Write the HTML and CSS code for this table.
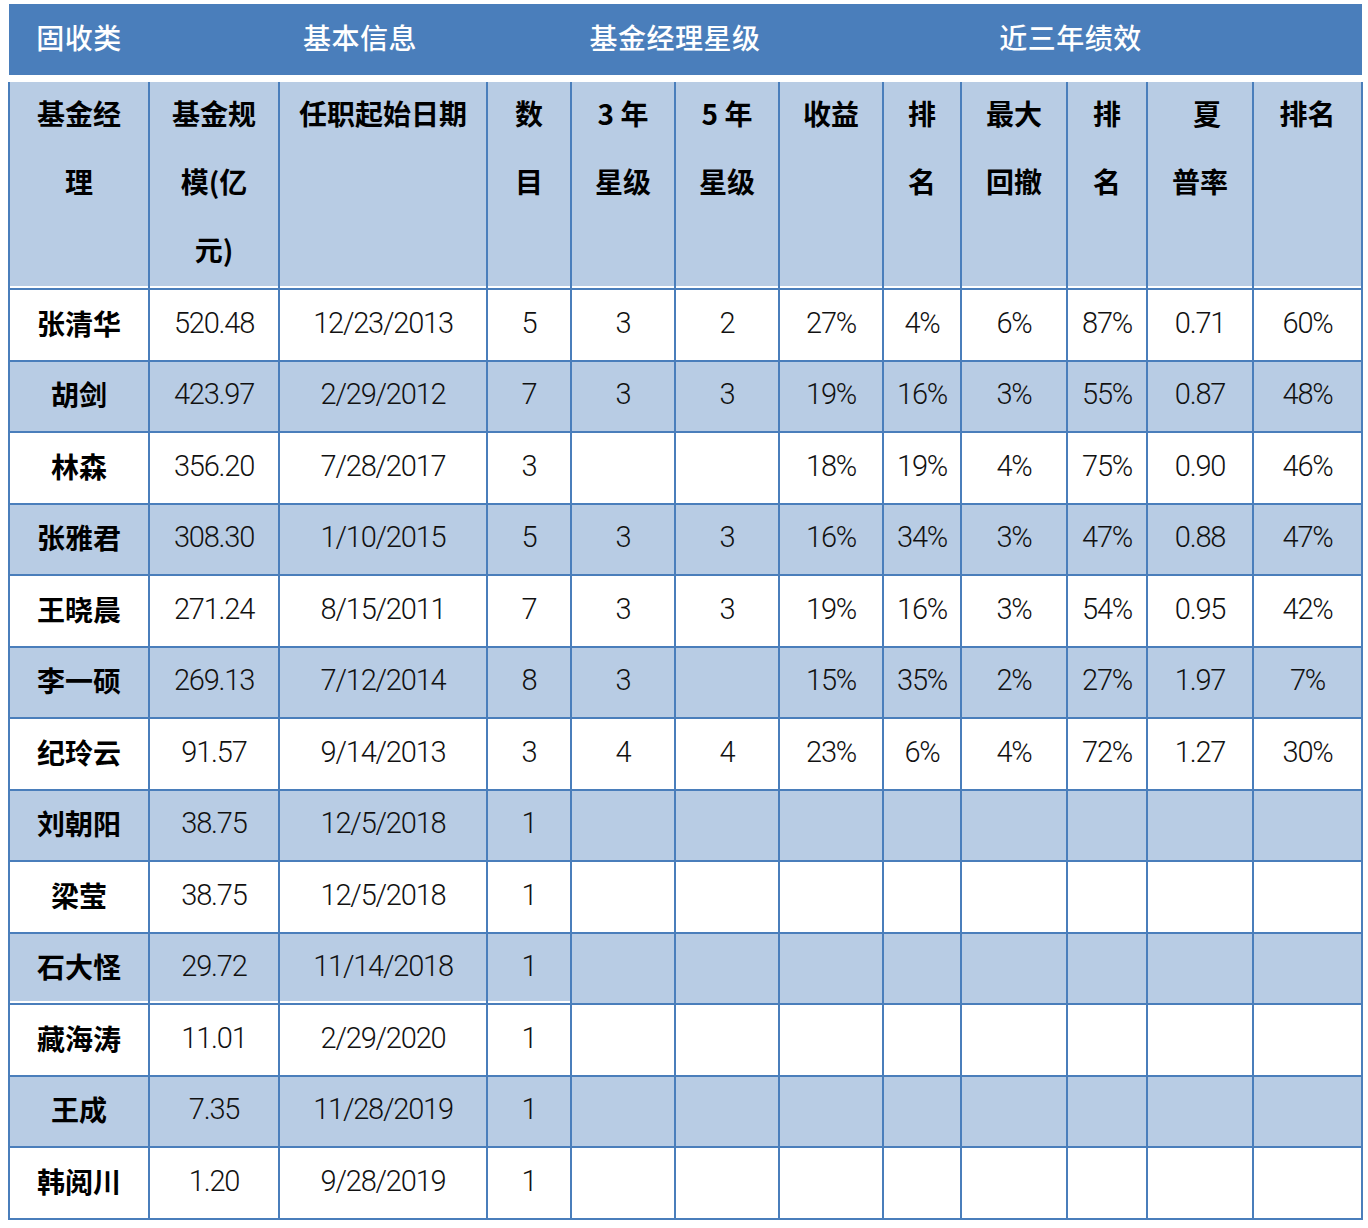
FILE: index.html
```html
<!DOCTYPE html>
<html lang="zh-CN">
<head>
<meta charset="utf-8">
<title>固收类 基金经理</title>
<link rel="stylesheet" href="styles.css">
</head>
<body>
<table class="grid">
  <colgroup>
    <col class="c1"><col class="c2"><col class="c3"><col class="c4"><col class="c5"><col class="c6">
    <col class="c7"><col class="c8"><col class="c9"><col class="c10"><col class="c11"><col class="c12">
  </colgroup>
  <thead>
    <tr class="band">
      <th>固收类</th>
      <th colspan="3">基本信息</th>
      <th colspan="2">基金经理星级</th>
      <th colspan="6">近三年绩效</th>
    </tr>
    <tr class="sub">
      <th><div class="lbl">基金经<br>理</div></th>
      <th><div class="lbl">基金规<br>模(亿<br>元)</div></th>
      <th><div class="lbl">任职起始日期</div></th>
      <th><div class="lbl">数<br>目</div></th>
      <th><div class="lbl">3 年<br>星级</div></th>
      <th><div class="lbl">5 年<br>星级</div></th>
      <th><div class="lbl">收益</div></th>
      <th><div class="lbl">排<br>名</div></th>
      <th><div class="lbl">最大<br>回撤</div></th>
      <th><div class="lbl">排<br>名</div></th>
      <th><div class="lbl"><span class="shift">夏</span><br>普率</div></th>
      <th><div class="lbl">排名</div></th>
    </tr>
  </thead>
  <tbody>
    <tr><td class="nm">张清华</td><td>520.48</td><td>12/23/2013</td><td>5</td><td>3</td><td>2</td><td>27%</td><td>4%</td><td>6%</td><td>87%</td><td>0.71</td><td>60%</td></tr>
    <tr class="alt"><td class="nm">胡剑</td><td>423.97</td><td>2/29/2012</td><td>7</td><td>3</td><td>3</td><td>19%</td><td>16%</td><td>3%</td><td>55%</td><td>0.87</td><td>48%</td></tr>
    <tr><td class="nm">林森</td><td>356.20</td><td>7/28/2017</td><td>3</td><td></td><td></td><td>18%</td><td>19%</td><td>4%</td><td>75%</td><td>0.90</td><td>46%</td></tr>
    <tr class="alt"><td class="nm">张雅君</td><td>308.30</td><td>1/10/2015</td><td>5</td><td>3</td><td>3</td><td>16%</td><td>34%</td><td>3%</td><td>47%</td><td>0.88</td><td>47%</td></tr>
    <tr><td class="nm">王晓晨</td><td>271.24</td><td>8/15/2011</td><td>7</td><td>3</td><td>3</td><td>19%</td><td>16%</td><td>3%</td><td>54%</td><td>0.95</td><td>42%</td></tr>
    <tr class="alt"><td class="nm">李一硕</td><td>269.13</td><td>7/12/2014</td><td>8</td><td>3</td><td></td><td>15%</td><td>35%</td><td>2%</td><td>27%</td><td>1.97</td><td>7%</td></tr>
    <tr><td class="nm">纪玲云</td><td>91.57</td><td>9/14/2013</td><td>3</td><td>4</td><td>4</td><td>23%</td><td>6%</td><td>4%</td><td>72%</td><td>1.27</td><td>30%</td></tr>
    <tr class="alt"><td class="nm">刘朝阳</td><td>38.75</td><td>12/5/2018</td><td>1</td><td></td><td></td><td></td><td></td><td></td><td></td><td></td><td></td></tr>
    <tr><td class="nm">梁莹</td><td>38.75</td><td>12/5/2018</td><td>1</td><td></td><td></td><td></td><td></td><td></td><td></td><td></td><td></td></tr>
    <tr class="alt"><td class="nm edge">石大怪</td><td class="edge">29.72</td><td class="edge">11/14/2018</td><td class="edge">1</td><td></td><td></td><td></td><td></td><td></td><td></td><td></td><td></td></tr>
    <tr><td class="nm">藏海涛</td><td>11.01</td><td>2/29/2020</td><td>1</td><td></td><td></td><td></td><td></td><td></td><td></td><td></td><td></td></tr>
    <tr class="alt"><td class="nm">王成</td><td>7.35</td><td>11/28/2019</td><td>1</td><td></td><td></td><td></td><td></td><td></td><td></td><td></td><td></td></tr>
    <tr><td class="nm">韩阅川</td><td>1.20</td><td>9/28/2019</td><td>1</td><td></td><td></td><td></td><td></td><td></td><td></td><td></td><td></td></tr>
  </tbody>
</table>
</body>
</html>
```

FILE: styles.css
```css
html, body {
  margin: 0;
  padding: 0;
  background: #ffffff;
}

body {
  padding: 4px 0 0 8px;
  font-family: "Noto Sans CJK SC", "Noto Sans", sans-serif;
}

.grid {
  width: 1353px;
  table-layout: fixed;
  border-collapse: collapse;
  border-spacing: 0;
}

.c1 { width: 140px; }
.c2 { width: 130px; }
.c3 { width: 208px; }
.c4 { width: 84px; }
.c5 { width: 104px; }
.c6 { width: 104px; }
.c7 { width: 104px; }
.c8 { width: 78px; }
.c9 { width: 106px; }
.c10 { width: 80px; }
.c11 { width: 106px; }
.c12 { width: 109px; }

.band th {
  height: 66px;
  padding: 0 0 5px 0;
  background: #4a7ebb;
  color: #ffffff;
  font-size: 28px;
  font-weight: 500;
  text-align: center;
  vertical-align: middle;
  border: none;
  border-bottom: 7px solid #ffffff;
  letter-spacing: 0.5px;
}

.sub th {
  height: 206px;
  padding: 0;
  background: #b8cce4;
  color: #000000;
  font-size: 28px;
  font-weight: 700;
  line-height: 68px;
  text-align: center;
  vertical-align: top;
  border-left: 2px solid #4a7ebb;
  border-right: 2px solid #4a7ebb;
  border-bottom: 2px solid #4a7ebb;
  box-shadow: inset 0 -2px 0 #ffffff;
}

.lbl {
  margin-top: -3px;
}

.shift {
  padding-left: 14px;
}

tbody tr {
  height: 71.5px;
}

tbody td {
  padding: 0 0 4px 0;
  border: 2px solid #4a7ebb;
  background: #ffffff;
  color: #111111;
  font-family: Roboto, "Liberation Sans", sans-serif;
  font-weight: 300;
  font-size: 29px;
  letter-spacing: -1.2px;
  text-align: center;
  vertical-align: middle;
  white-space: nowrap;
}

tbody tr.alt td {
  background: #b8cce4;
}

tbody td.nm {
  font-family: "Noto Sans CJK SC", sans-serif;
  font-weight: 700;
  font-size: 28px;
  letter-spacing: 0;
  color: #000000;
}

tbody td.edge {
  box-shadow: inset 0 -2px 0 #ffffff;
}
```
